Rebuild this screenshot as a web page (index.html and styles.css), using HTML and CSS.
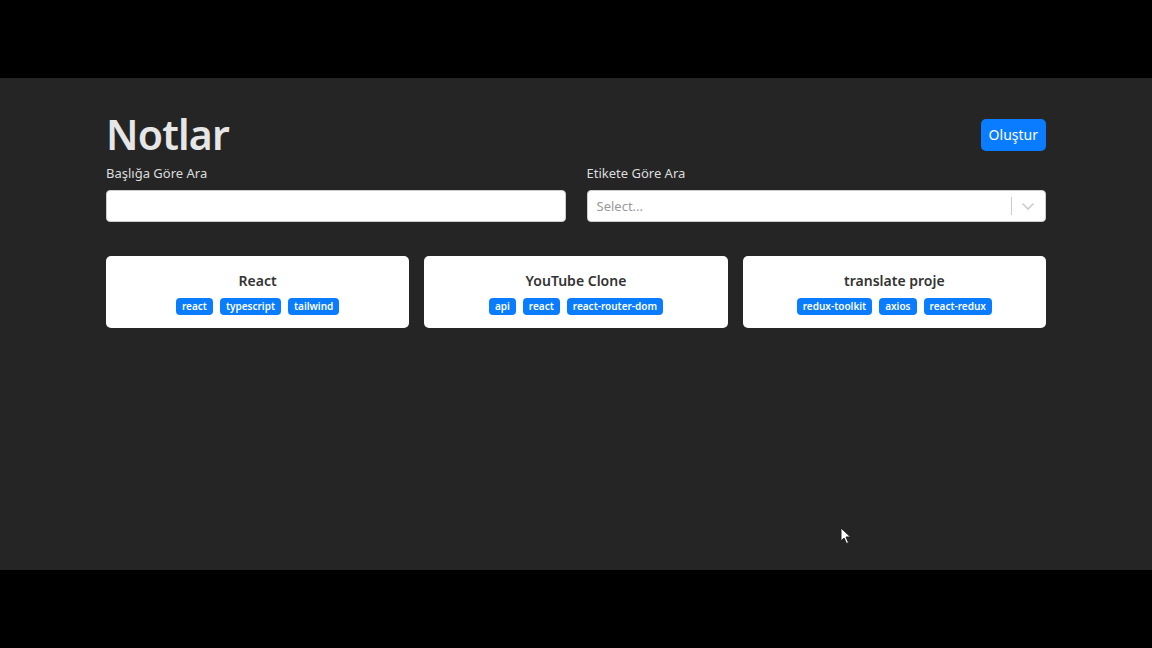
FILE: index.html
```html
<!DOCTYPE html>
<html lang="tr">
<head>
  <meta charset="UTF-8">
  <title>Notlar</title>
  <meta name="viewport" content="width=device-width, initial-scale=1.0">
  <link rel="stylesheet" href="styles.css">
</head>
<body>
<div class="screen">
  <div class="container">
    <div class="header">
      <h1>Notlar</h1>
      <button class="btn">Oluştur</button>
    </div>

    <div class="filters">
      <div class="field">
        <label for="title">Başlığa Göre Ara</label>
        <input id="title" type="text">
      </div>
      <div class="field">
        <label>Etikete Göre Ara</label>
        <div class="select">
          <span class="placeholder">Select...</span>
          <span class="sep"></span>
          <svg class="chevron" width="20" height="20" viewBox="0 0 20 20"><path d="M4.5 7.5 10 13l5.5-5.5" fill="none" stroke="#ccc" stroke-width="1.6"/></svg>
        </div>
      </div>
    </div>

    <div class="notes">
      <div class="card">
        <h3>React</h3>
        <div class="tags">
          <span class="tag">react</span>
          <span class="tag">typescript</span>
          <span class="tag">tailwind</span>
        </div>
      </div>
      <div class="card">
        <h3>YouTube Clone</h3>
        <div class="tags">
          <span class="tag">api</span>
          <span class="tag">react</span>
          <span class="tag">react-router-dom</span>
        </div>
      </div>
      <div class="card">
        <h3>translate proje</h3>
        <div class="tags">
          <span class="tag">redux-toolkit</span>
          <span class="tag">axios</span>
          <span class="tag">react-redux</span>
        </div>
      </div>
    </div>
  </div>

  <svg class="cursor" width="12" height="18" viewBox="0 0 12 18"><path d="M1 1v13l3-3 2.5 5.5 2-1L6 10h4.5z" fill="#fff" stroke="#222" stroke-width="1"/></svg>
</div>
</body>
</html>
```

FILE: styles.css
```css
* { box-sizing: border-box; margin: 0; padding: 0; }
body {
  font-family: 'Noto Sans', 'Open Sans', sans-serif;
  background: #000;
  padding: 78px 0;
}
.screen {
  position: relative;
  height: 492px;
  background: #252525;
  color: #ddd;
}
.container {
  width: 940px;
  margin: 0 auto;
  padding-top: 27px;
}
.header {
  display: flex;
  align-items: center;
  justify-content: space-between;
}
h1 {
  font-size: 41px;
  font-weight: 600;
  color: #e6e6e6;
  line-height: 58px;
  letter-spacing: -0.8px;
}
.btn {
  font-family: inherit;
  font-size: 14px;
  color: #fff;
  background: #0a7cff;
  border: none;
  border-radius: 5px;
  padding: 0 8px;
  height: 32px;
  margin-top: 1px;
}
.filters {
  display: grid;
  grid-template-columns: 1fr 1fr;
  gap: 21px;
  margin-top: 1px;
}
.field label {
  display: block;
  font-size: 13px;
  color: #ddd;
  line-height: 18px;
  margin-bottom: 8px;
}
.field input, .select {
  width: 100%;
  height: 32px;
  border: 1px solid #ccc;
  border-radius: 4px;
  background: #fff;
}
.select {
  display: flex;
  align-items: center;
  padding-left: 9px;
}
.placeholder {
  flex: 1;
  font-size: 13px;
  color: #9a9a9a;
}
.sep {
  width: 1px;
  height: 18px;
  background: #ccc;
}
.chevron { margin: 0 7px 0 6px; }
.notes {
  display: grid;
  grid-template-columns: repeat(3, 1fr);
  gap: 15px;
  margin-top: 34px;
}
.card {
  background: #fff;
  border-radius: 5px;
  height: 72px;
  padding-top: 15px;
  text-align: center;
}
.card h3 {
  font-size: 14px;
  font-weight: 600;
  color: #333;
  line-height: 20px;
}
.tags {
  display: flex;
  justify-content: center;
  gap: 7px;
  margin-top: 7px;
}
.tag {
  background: #0a7cff;
  color: #fff;
  font-size: 10px;
  font-weight: 600;
  line-height: 17px;
  padding: 0 6px;
  border-radius: 4px;
}
.cursor {
  position: absolute;
  left: 840px;
  top: 449px;
}
```
